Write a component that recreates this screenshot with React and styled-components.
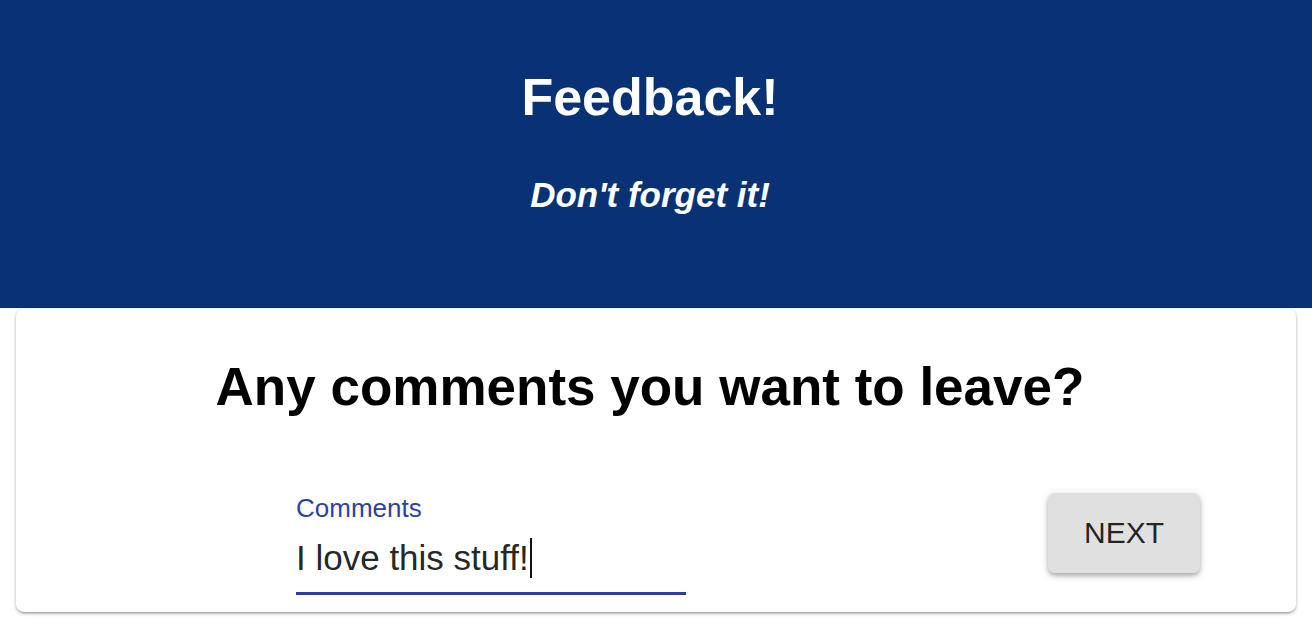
import React from "react";
import styled, { createGlobalStyle } from "styled-components";

const GlobalStyle = createGlobalStyle`
  html, body {
    margin: 0;
    padding: 0;
    background: #ffffff;
    font-family: "Liberation Sans", Arial, Helvetica, sans-serif;
  }
`;

const Page = styled.div`
  display: flex;
  flex-direction: column;
  min-height: 629px;
`;

const Header = styled.header`
  height: 308px;
  background: #083274;
  color: #ffffff;
  display: flex;
  flex-direction: column;
  align-items: center;
  padding: 67px 12px 0 0;
  box-sizing: border-box;
`;

const Title = styled.h1`
  margin: 0;
  font-size: 52px;
  line-height: 60px;
  font-weight: 700;
`;

const Subtitle = styled.h2`
  margin: 47px 0 0;
  font-size: 35px;
  line-height: 42px;
  font-weight: 700;
  font-style: italic;
`;

const Card = styled.section`
  margin: 1px 16px 0;
  background: #ffffff;
  border-radius: 8px;
  box-shadow: 0 1px 4px rgba(0, 0, 0, 0.22), 0 2px 2px rgba(0, 0, 0, 0.14),
    0 3px 1px -2px rgba(0, 0, 0, 0.12);
  padding: 47px 0 17px;
  display: flex;
  flex-direction: column;
`;

const Question = styled.h3`
  margin: 0 12px 0 0;
  text-align: center;
  font-size: 53px;
  line-height: 62px;
  font-weight: 700;
  color: #000000;
`;

const Row = styled.div`
  margin-top: 75px;
  display: flex;
  justify-content: space-between;
  align-items: flex-start;
  padding: 0 96px 0 280px;
`;

const Field = styled.div`
  width: 390px;
  display: flex;
  flex-direction: column;
`;

const Label = styled.label`
  font-size: 26px;
  line-height: 30px;
  color: #303f9f;
`;

const InputText = styled.div`
  margin-top: 14px;
  font-size: 35px;
  line-height: 42px;
  color: rgba(0, 0, 0, 0.87);
  padding-bottom: 13px;
  border-bottom: 3px solid #303f9f;
  white-space: nowrap;
`;

const Caret = styled.span`
  display: inline-block;
  width: 2px;
  height: 40px;
  margin-left: 1px;
  background: #111111;
  vertical-align: -8px;
`;

const Button = styled.button`
  width: 152px;
  height: 80px;
  border: none;
  border-radius: 7px;
  background: #e0e0e0;
  color: rgba(0, 0, 0, 0.87);
  font-family: inherit;
  font-size: 30px;
  text-transform: uppercase;
  box-shadow: 0 2px 4px -1px rgba(0, 0, 0, 0.2), 0 4px 5px 0 rgba(0, 0, 0, 0.14),
    0 1px 10px 0 rgba(0, 0, 0, 0.12);
  cursor: pointer;
`;

const App = () => {
  return (
    <Page>
      <GlobalStyle />
      <Header>
        <Title>Feedback!</Title>
        <Subtitle>Don't forget it!</Subtitle>
      </Header>
      <Card>
        <Question>Any comments you want to leave?</Question>
        <Row>
          <Field>
            <Label>Comments</Label>
            <InputText>
              I love this stuff!
              <Caret />
            </InputText>
          </Field>
          <Button>Next</Button>
        </Row>
      </Card>
    </Page>
  );
};

export default App;
